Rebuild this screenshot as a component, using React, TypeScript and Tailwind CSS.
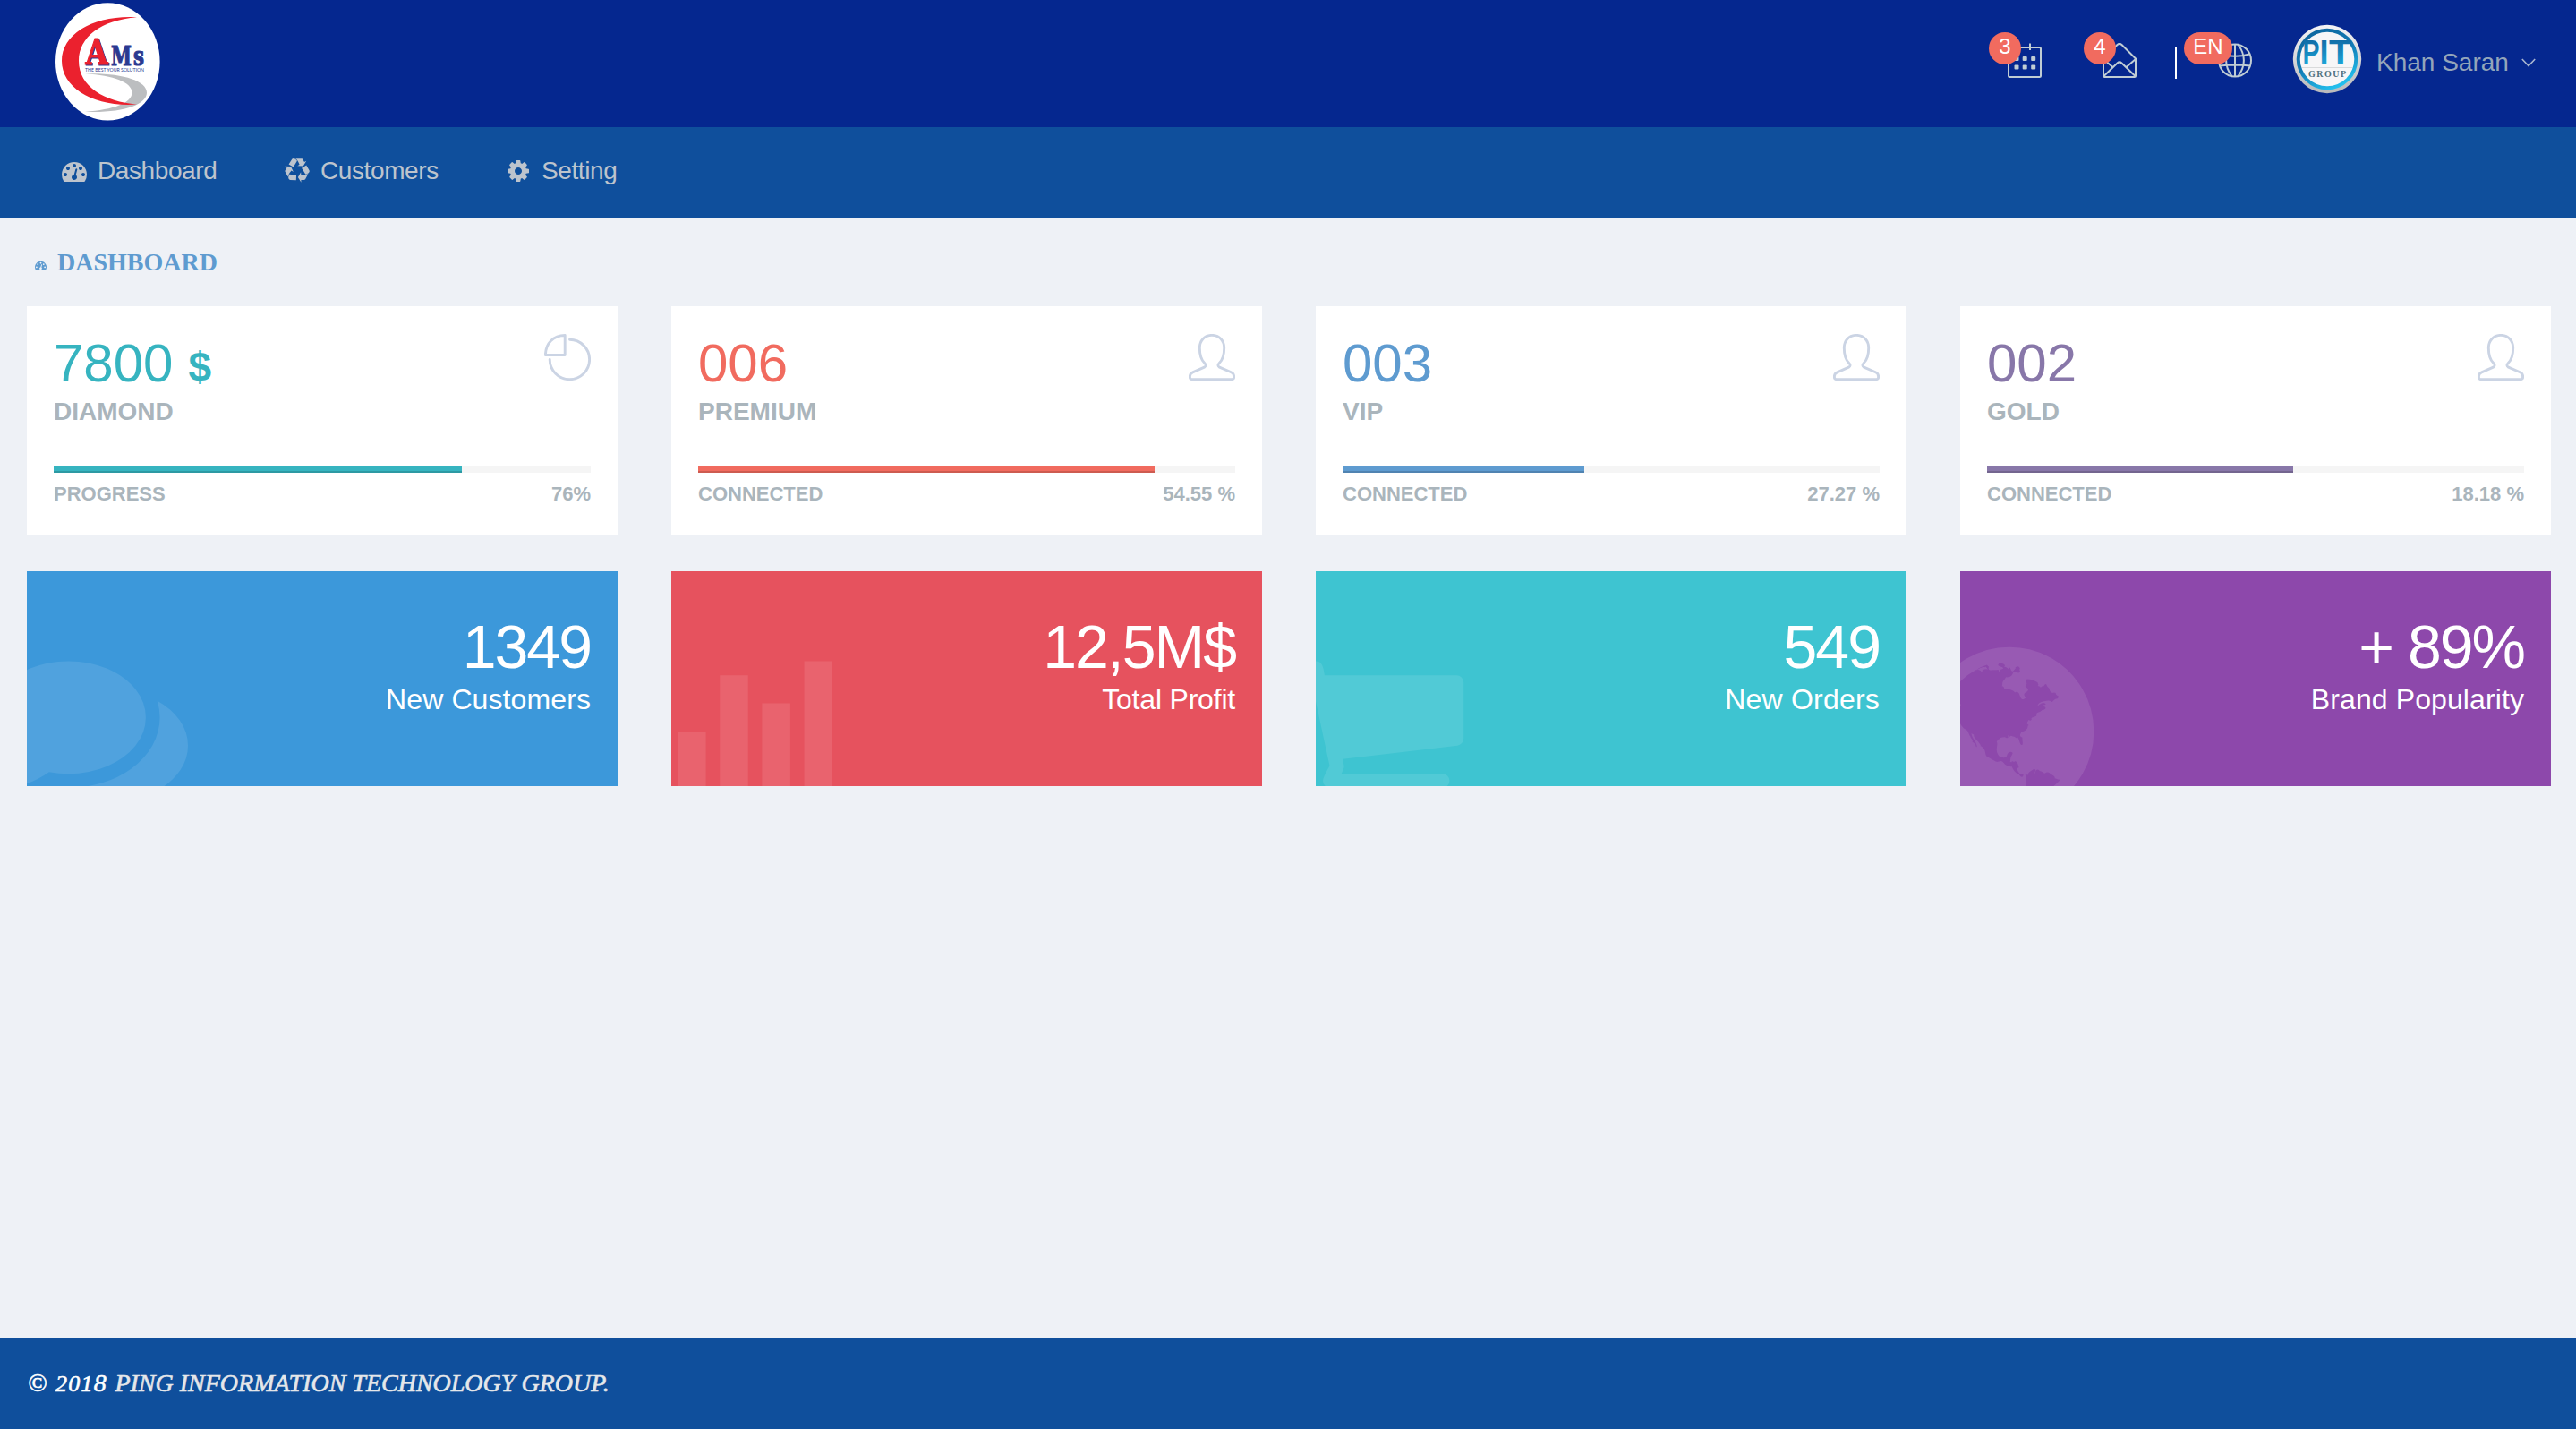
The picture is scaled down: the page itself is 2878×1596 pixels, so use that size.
import React from "react";

const SANS = "font-['Liberation_Sans',Arial,sans-serif]";
const SERIF = "font-['Liberation_Serif','Times_New_Roman',serif]";

const PATHS = {
  dashboard:
    "M384 1152q0-53-37.5-90.5t-90.5-37.5-90.5 37.5-37.5 90.5 37.5 90.5 90.5 37.5 90.5-37.5 37.5-90.5zm192-448q0-53-37.5-90.5t-90.5-37.5-90.5 37.5-37.5 90.5 37.5 90.5 90.5 37.5 90.5-37.5 37.5-90.5zm428 481l101-382q6-26-7.5-48.5t-38.5-29.5-48 6.5-30 39.5l-101 382q-60 5-107 43.5t-63 98.5q-20 77 20 146t117 89 146-20 89-117q16-60-6-117t-72-91zm660-33q0-53-37.5-90.5t-90.5-37.5-90.5 37.5-37.5 90.5 37.5 90.5 90.5 37.5 90.5-37.5 37.5-90.5zm-640-640q0-53-37.5-90.5t-90.5-37.5-90.5 37.5-37.5 90.5 37.5 90.5 90.5 37.5 90.5-37.5 37.5-90.5zm448 192q0-53-37.5-90.5t-90.5-37.5-90.5 37.5-37.5 90.5 37.5 90.5 90.5 37.5 90.5-37.5 37.5-90.5zm320 448q0 261-141 483-19 29-54 29h-1402q-35 0-54-29-141-221-141-483 0-182 71-348t191-286 286-191 348-71 348 71 286 191 191 286 71 348z",
  recycle:
    "M836 1169l-15 368-2 22-420-29q-36-3-67-31.5t-47-65.5q-11-27-14.5-55t4-65 12-55 21.5-64 19-53q78 12 509 28zm-387-586l180 379-147-92q-63 72-111.5 144.5t-72.5 125-39.5 94.5-18.5 63l-4 21-190-357q-17-26-18-56t6-47l8-18q35-63 114-188l-140-86zm1231 517l-188 359q-12 29-36.5 46.5t-43.5 20.5l-18 4q-71 7-219 12l8 164-230-367 211-362 7 173q170 16 283 5t170-33zm-785-924q-47 63-265 435l-317-187-19-12 225-356q20-31 60-45t80-10q24 2 48.5 12t42 21 41.5 33 36 34.5 36 39.5 32 35zm655 307l212 363q18 37 12.5 76t-27.5 74q-13 20-33 37t-38 28-48.5 22-47 16-51.5 14-46 12q-34-72-265-436l313-195zm-143-226l142-83-220 373-419-20 151-86q-34-89-75-166t-75.5-123.5-64.5-80-47-46.5l-17-13 405 1q31-3 58 10.5t39 28.5l11 15q39 61 112 190z",
  cog: "M1152 896q0-106-75-181t-181-75-181 75-75 181 75 181 181 75 181-75 75-181zm512-109v222q0 12-8 23t-20 13l-185 28q-19 54-39 91 35 50 107 138 10 12 10 25t-9 23q-27 37-99 108t-94 71q-12 0-26-9l-138-108q-44 23-91 38-16 136-29 186-7 28-36 28h-222q-14 0-24.5-8.5t-11.5-21.5l-28-184q-49-16-90-37l-141 107q-10 9-25 9-14 0-25-11-126-114-165-168-7-10-7-23 0-12 8-23 15-21 51-66.5t54-70.5q-27-50-41-99l-183-27q-13-2-21-12.5t-8-23.5v-222q0-12 8-23t19-13l186-28q14-46 39-92-40-57-107-138-10-12-10-24 0-10 9-23 26-36 98.5-107.5t94.5-71.5q13 0 26 10l138 107q44-23 91-38 16-136 29-186 7-28 36-28h222q14 0 24.5 8.5t11.5 21.5l28 184q49 16 90 37l142-107q9-9 24-9 13 0 25 10 129 119 165 170 7 8 7 22 0 12-8 23-15 21-51 66.5t-54 70.5q26 50 41 98l183 28q13 2 21 12.5t8 23.5z",
  comments:
    "M1408 768q0 139-94 257t-256.5 186.5-353.5 68.5q-86 0-176-16-124 88-278 128-36 9-86 16h-3q-11 0-20.5-8t-11.5-21q-1-3-1-6.5t.5-6.5 2-6l2.5-5 3.5-5.5 4-5 4.5-5 4-4.5q5-6 23-25t26-29.5 22.5-29 25-38.5 20.5-44q-124-72-195-177t-71-224q0-139 94-257t256.5-186.5 353.5-68.5 353.5 68.5 256.5 186.5 94 257zm384 256q0 120-71 224.5t-195 176.5q10 24 20.5 44t25 38.5 22.5 29 26 29.5 23 25q1 1 4 4.5t4.5 5 4 5 3.5 5.5l2.5 5 2 6 .5 6.5-1 6.5q-3 14-13 22t-22 7q-50-7-86-16-154-40-278-128-90 16-176 16-271 0-472-132 58 4 88 4 161 0 309-45t264-129q125-92 192-212t67-254q0-77-23-152 129 71 204 178t75 230z",
  chart:
    "M640 896v512h-256v-512h256zm384-512v1024h-256v-1024h256zm384 256v768h-256v-768h256zm384-384v1152h-256v-1152h256z",
  cart: "M704 1536q0 52-38 90t-90 38-90-38-38-90 38-90 90-38 90 38 38 90zm896 0q0 52-38 90t-90 38-90-38-38-90 38-90 90-38 90 38 38 90zm128-1088v512q0 24-16.5 42.5t-40.5 21.5l-1044 122q13 60 13 70 0 16-24 64h920q26 0 45 19t19 45-19 45-45 19h-1024q-26 0-45-19t-19-45q0-11 8-31.5t16-36 21.5-40 15.5-29.5l-177-823h-204q-26 0-45-19t-19-45 19-45 45-19h256q16 0 28.5 6.5t19.5 15.5 13 24.5 8 26 5.5 29.5 4.5 26h1201q26 0 45 19t19 45z",
  globe:
    "M896 128q209 0 385.5 103t279.5 279.5 103 385.5-103 385.5-279.5 279.5-385.5 103-385.5-103-279.5-279.5-103-385.5 103-385.5 279.5-279.5 385.5-103zm274 521q-2 1-9.5 9.5t-13.5 9.5q2 0 4.5-5t5-11 3.5-7q6-7 22-15 14-6 52-12 34-8 51 11-2-2 9.5-13t14.5-12q3-2 15-4.5t15-7.5l2-22q-12 1-17.5-7t-6.5-21q0 2-6 8 0-7-4.5-8t-11.5 1-9 1q-10-3-15-7.5t-8-16.5-4-15q-2-5-9.5-11t-9.5-10q-1-2-2.5-5.5t-3-6.5-4-5.5-5.5-2.5-7 5-7.5 10-4.5 5q-3-2-6-1.5t-4.5 1-4.5 3-5 3.5q-3 2-8.5 3t-8.5 2q15-5-1-11-10-4-16-3 9-4 7.5-12t-8.5-14h5q-1-4-8.5-8.5t-17.5-8.5-13-6q-8-5-34-9.5t-33-.5q-5 6-4.5 10.5t4 14 3.5 12.5q1 6-5.5 13t-6.5 12q0 7 14 15.5t10 21.5q-3 8-16 16t-16 12q-5 8-1.5 18.5t10.5 16.5q2 2 1.5 4t-3.5 4.5-5.5 4-6.5 3.5l-3 2q-11 5-20.5-6t-13.5-26q-7-25-16-30-23-8-29 1-5-13-41-26-25-9-58-4 6-1 0-15-7-15-19-12 3-6 4-17.5t1-13.5q3-13 12-23 1-1 7-8.5t9.5-13.5.5-6q35 4 50-11 5-5 11.5-17t10.5-17q9-6 14-5.5t14.5 5.5 14.5 5q14 1 15.5-11t-7.5-20q12 1 3-17-4-7-8-9-12-4-27 5-8 4 2 8-1-1-9.5 10.5t-16.5 17.5-16-5q-1-1-5.5-13.5t-9.5-13.5q-8 0-16 15 3-8-11-15t-24-8q19-12-8-27-7-4-20.5-5t-19.5 4q-5 7-5.5 11.5t5 8 10.5 5.5 11.5 4 8.5 3q14 10 8 14-2 1-8.5 3.5t-11.5 4.5-6 4q-3 4 0 14t-2 14q-5-5-9-17.5t-7-16.5q7 9-25 6l-10-1q-4 0-16 2t-20.5 1-13.5-8q-4-8 0-20 1-4 4-2-4-3-11-9.5t-10-8.5q-46 15-94 41 6 1 12-1 5-2 13-6.5t10-5.5q34-14 42-7l5-5q14 16 20 25-7-4-30-1-20 6-22 12 7 12 5 18-4-3-11.5-10t-14.5-11-15-5q-16 0-22 1-146 80-235 222 7 7 12 8 4 1 5 9t2.5 11 11.5-3q9 8 3 19 1-1 44 27 19 17 21 21 3 11-10 18-1-2-9-9t-9-4q-3 5 .5 18.5t10.5 12.5q-7 0-9.5 16t-2.5 35.5-1 23.5l2 1q-3 12 5.5 34.5t21.5 19.5q-13 3 20 43 6 8 8 9 3 2 12 7.5t15 10 10 10.5q4 5 10 22.5t14 23.5q-2 6 9.5 20t10.5 23q-1 0-2.5 1t-2.5 1q3 7 15.5 14t15.5 13q1 3 2 10t3 11 8 2q2-20-24-62-15-25-17-29-3-5-5.5-15.5t-4.5-14.5q2 0 6 1.5t8.5 3.5 7.5 4 2 3q-3 7 2 17.5t12 18.5 17 19 12 13q6 6 14 19.5t0 13.5q9 0 20 10.5t17 19.5q5 8 8 26t5 24q2 7 8.5 13.5t12.5 9.5l16 8 13 7q5 2 18.5 10.5t21.5 11.5q10 4 16 4t14.5-2.5 13.5-3.5q15-2 29 15t21 21q36 19 55 11-2 1 .5 7.5t8 15.5 9 14.5 5.5 8.5q5 6 18 15t18 15q6-4 7-9-3 8 7 20t18 10q14-3 14-32-31 15-49-18 0-1-2.5-5.5t-4-8.5-2.5-8.5 0-7.5 5-3q9 0 10-3.5t-2-12.5-4-13q-1-8-11-20t-12-15q-5 9-16 8t-16-9q0 1-1.5 5.5t-1.5 6.5q-13 0-15-1 1-3 2.5-17.5t3.5-22.5q1-4 5.5-12t7.5-14.5 4-12.5-4.5-9.5-17.5-2.5q-19 1-26 20-1 3-3 10.5t-5 11.5-9 7q-7 3-24 2t-24-5q-13-8-22.5-29t-9.5-37q0-10 2.5-26.5t3-25-5.5-24.5q3-2 9-9.5t10-10.5q2-1 4.5-1.5t4.5 0 4-1.5 3-6q-1-1-4-3-3-3-4-3 7 3 28.5-1.5t27.5 1.5q15 11 22-2 0-1-2.5-9.5t-.5-13.5q5 27 29 9 3 3 15.5 5t17.5 5q3 2 7 5.5t5.5 4.5 5-.5 8.5-6.5q10 14 12 24 11 40 19 44 7 3 11 2t4.5-9.5 0-14-1.5-12.5l-1-8v-18l-1-8q-15-3-18.5-12t1.5-18.5 15-18.5q1-1 8-3.5t15.5-6.5 12.5-8q21-19 15-35 7 0 11-9-1 0-5-3t-7.5-5-4.5-2q9-5 2-16 5-3 7.5-11t7.5-10q9 12 21 2 8-8 1-16 5-7 20.5-10.5t18.5-9.5q7 2 8-2t1-12 3-12q4-5 15-9t13-5l17-11q3-4 0-4 18 2 31-11 10-11-6-20 3-6-3-9.5t-15-5.5q3-1 11.5-.5t10.5-1.5q15-10-7-16-17-5-43 12zm-163 877q206-36 351-189-3-3-12.5-4.5t-12.5-3.5q-18-7-24-8 1-7-2.5-13t-8-9-12.5-8-11-7q-2-2-7-6t-7-5.5-7.5-4.5-8.5-2-10 1l-3 1q-3 1-5.5 2.5t-5.5 3-4 3 0 2.5q-21-17-36-22-5-1-11-5.5t-10.5-7-10-1.5-11.5 7q-5 5-6 15t-2 13q-7-5 0-17.5t2-18.5q-3-6-10.5-4.5t-12 4.5-11.5 8.5-9 6.5-8.5 5.5-8.5 7.5q-3 4-6 12t-5 11q-2-4-11.5-6.5t-9.5-5.5q2 10 4 35t5 38q7 31-12 48-27 25-29 40-4 22 12 26 0 7-8 20.5t-7 21.5q0 6 2 16z",
};

function Glyph({ name, className }: { name: keyof typeof PATHS; className: string }) {
  return (
    <svg viewBox="0 0 1792 1792" className={className} fill="currentColor">
      <path d={PATHS[name]} />
    </svg>
  );
}

function Logo() {
  return (
    <svg viewBox="0 0 118 132" className="ml-[61px] mt-[3px] h-[132px] w-[118px]">
      <ellipse cx="59.3" cy="65.8" rx="58.3" ry="65.6" fill="#fff" />
      <path
        d="M34 79.5C74 78 103 87 103 100.500C103 114 76 123.500 34 121.800C66 119.500 86.500 112 86.500 100.500C86.500 89 66 81 34 79.500Z"
        fill="#bcbec0"
      />
      <path
        d="M92 16.200C45 13.500 8 34 8 65C8 96 45 117 92 113.500C56 110.500 27 94 27 65C27 38 52 19.500 92 16.200Z"
        fill="#eb212e"
      />
      <g fontFamily="'DejaVu Serif', serif" fontWeight="700" strokeWidth="1.200">
        <text
          x="34.500" y="68.800" fontSize="39" textLength="25" lengthAdjust="spacingAndGlyphs"
          fill="#eb212e" stroke="#eb212e" className="[filter:drop-shadow(1px_1.5px_0_#2b3990)]"
        >
          A
        </text>
        <text x="63" y="69.500" fontSize="30" textLength="23" lengthAdjust="spacingAndGlyphs" fill="#2b3990" stroke="#2b3990">M</text>
        <text x="88" y="69.500" fontSize="29" textLength="12" lengthAdjust="spacingAndGlyphs" fill="#2b3990" stroke="#2b3990">s</text>
      </g>
      <text
        x="34" y="76.800" fontSize="6.200" textLength="66" lengthAdjust="spacingAndGlyphs"
        fontFamily="Lato, sans-serif" fill="#2b3990"
      >
        THE BEST YOUR SOLUTION
      </text>
    </svg>
  );
}

function Avatar() {
  return (
    <svg viewBox="0 0 78 78" className="h-[78px] w-[78px]">
      <defs>
        <linearGradient id="rim" x1="0" y1="0" x2="0" y2="1">
          <stop offset="0" stopColor="#f4f4f6" />
          <stop offset="1" stopColor="#b9b9bb" />
        </linearGradient>
        <linearGradient id="ring" x1="0.2" y1="0" x2="0.7" y2="1">
          <stop offset="0" stopColor="#0e659d" />
          <stop offset="0.5" stopColor="#127bb5" />
          <stop offset="1" stopColor="#25c8f4" />
        </linearGradient>
        <linearGradient id="ink" x1="0" y1="0" x2="0" y2="1">
          <stop offset="0.2" stopColor="#126fa9" />
          <stop offset="1" stopColor="#1fb4e4" />
        </linearGradient>
      </defs>
      <circle cx="39" cy="39" r="38.200" fill="url(#rim)" />
      <circle cx="39" cy="39" r="34.300" fill="url(#ring)" />
      <circle cx="39" cy="39" r="30.300" fill="#f7f6f7" />
      <g fontFamily="'Liberation Sans', Arial, sans-serif" fontWeight="700" fill="url(#ink)">
        <text x="11.500" y="44.600" fontSize="38" textLength="19" lengthAdjust="spacingAndGlyphs">P</text>
        <text x="30.500" y="44.600" fontSize="38" textLength="10" lengthAdjust="spacingAndGlyphs">I</text>
        <text x="41" y="44.600" fontSize="38" textLength="25.500" lengthAdjust="spacingAndGlyphs">T</text>
      </g>
      <path d="M11 48.500H67" stroke="#d9dadb" strokeWidth="1" />
      <text
        x="18" y="58.800" fontSize="10" textLength="42" lengthAdjust="spacing"
        fontFamily="'Liberation Serif', serif" fontWeight="700" fill="#4f6f7c"
      >
        GROUP
      </text>
    </svg>
  );
}

function Calendar() {
  return (
    <svg viewBox="0 0 38 39" className="h-[39px] w-[38px]" fill="none" stroke="#c0cdd4" strokeWidth="2">
      <rect x="1" y="5" width="36" height="33" rx="1.500" />
      <path d="M13 0.500V8M25 0.500V8" />
      <g fill="#c0cdd4" stroke="none">
        <rect x="7.500" y="15" width="5" height="5" rx="1" />
        <rect x="16.700" y="15" width="5" height="5" rx="1" />
        <rect x="26.200" y="15" width="5" height="5" rx="1" />
        <rect x="7.500" y="24.400" width="5" height="5" rx="1" />
        <rect x="16.700" y="24.400" width="5" height="5" rx="1" />
        <rect x="26.200" y="24.400" width="5" height="5" rx="1" />
      </g>
    </svg>
  );
}

function Envelope() {
  return (
    <svg viewBox="0 0 38 39" className="h-[39px] w-[38px]" fill="none" stroke="#c0cdd4" strokeWidth="2" strokeLinejoin="round">
      <path d="M1 17.500L16.500 2Q19 -0.200 21.500 2L37 17.500V36.500Q37 38 35.500 38H2.500Q1 38 1 36.500Z" />
      <path d="M1.500 37L16.500 22.500Q19 20.200 21.500 22.500L36.500 37M1 18L11.500 27M37 18L26.500 27" />
    </svg>
  );
}

function WorldGrid() {
  return (
    <svg viewBox="0 0 38 39" className="h-[39px] w-[38px]" fill="none" stroke="#c0cdd4" strokeWidth="2">
      <circle cx="19" cy="19.500" r="18" />
      <path d="M19 1.500V37.500M2 25.500Q19 23.500 36 25.500M3 12.500Q19 17 35 12.500" />
      <path d="M15.500 2C7 13 7 26 15.500 37M22.500 2C31 13 31 26 22.500 37" />
    </svg>
  );
}

function PieIcon() {
  return (
    <svg viewBox="0 0 52 52" className="h-[52px] w-[52px]" fill="none" stroke="#cbd4e4" strokeWidth="2.900" strokeLinecap="round" strokeLinejoin="round">
      <path d="M23.200 1.500V23.500H1.400C1.400 11 10 1.500 23.200 1.500Z" />
      <path d="M28.500 6.300A22.200 22.200 0 1 1 6.200 28.500" />
    </svg>
  );
}

function PersonIcon() {
  return (
    <svg viewBox="0 0 52 52" className="h-[52px] w-[52px]" fill="none" stroke="#cbd4e4" strokeWidth="2.900" strokeLinejoin="round">
      <path d="M26 1.400C17.500 1.400 12.300 7.500 12.300 15.500C12.300 23 14 29 17.800 32.500C19.600 34.200 19.600 36 17.500 37.200L4.500 42.800Q1.400 44.200 1.400 47.500V48.500Q1.400 50.600 3.500 50.600H48.500Q50.600 50.600 50.600 48.500V47.500Q50.600 44.200 47.500 42.800L34.500 37.200C32.400 36 32.400 34.200 34.200 32.500C38 29 39.700 23 39.700 15.500C39.700 7.500 34.500 1.400 26 1.400Z" />
    </svg>
  );
}

function IconWithBadge({ badge, badgeClass, children }: { badge: string; badgeClass: string; children: React.ReactNode }) {
  return (
    <div className="relative h-[39px] w-[38px]">
      {children}
      <span className={`absolute top-[-12px] flex h-[36px] items-center justify-center rounded-full bg-[#f16b5f] pb-[4px] text-[24px] leading-none text-white ${badgeClass}`}>
        {badge}
      </span>
    </div>
  );
}

const metrics = [
  { value: "7800", unit: "$", name: "DIAMOND", status: "PROGRESS", pct: "76%", width: "76%", color: "text-[#36b4c0]", bar: "bg-[#36b4c0]", icon: "pie" },
  { value: "006", unit: "", name: "PREMIUM", status: "CONNECTED", pct: "54.55 %", width: "85%", color: "text-[#f16b5f]", bar: "bg-[#f16b5f]", icon: "person" },
  { value: "003", unit: "", name: "VIP", status: "CONNECTED", pct: "27.27 %", width: "45%", color: "text-[#5e9bd0]", bar: "bg-[#5e9bd0]", icon: "person" },
  { value: "002", unit: "", name: "GOLD", status: "CONNECTED", pct: "18.18 %", width: "57%", color: "text-[#8877a9]", bar: "bg-[#8877a9]", icon: "person" },
];

const tiles: { value: string; label: string; bg: string; icon: keyof typeof PATHS; iconLeft: string; tracking: string }[] = [
  { value: "1349", label: "New Customers", bg: "bg-[#3c98da]", icon: "comments", iconLeft: "left-[-40px]", tracking: "tracking-[0.1px]" },
  { value: "12,5M$", label: "Total Profit", bg: "bg-[#e6525e]", icon: "chart", iconLeft: "left-[-40px]", tracking: "tracking-[-0.2px]" },
  { value: "549", label: "New Orders", bg: "bg-[#3ec4d1]", icon: "cart", iconLeft: "left-[-47px]", tracking: "tracking-[0.2px]" },
  { value: "+ 89%", label: "Brand Popularity", bg: "bg-[#8d48ab]", icon: "globe", iconLeft: "left-[-55px]", tracking: "tracking-[0.1px]" },
];

const nav: { label: string; icon: keyof typeof PATHS; width: string }[] = [
  { label: "Dashboard", icon: "dashboard", width: "w-[249px]" },
  { label: "Customers", icon: "recycle", width: "w-[247px]" },
  { label: "Setting", icon: "cog", width: "w-[240px]" },
];

export default function App() {
  return (
    <div className={`flex h-[1596px] w-[2878px] flex-col overflow-hidden bg-[#eef1f6] ${SANS}`}>
      <header className="flex h-[142px] shrink-0 justify-between bg-[#05278f]">
        <Logo />
        <div className="flex items-start pr-[45px]">
          <div className="mt-[48px] flex">
            <IconWithBadge badge="3" badgeClass="left-[-21px] w-[36px]"><Calendar /></IconWithBadge>
            <div className="ml-[68px]">
              <IconWithBadge badge="4" badgeClass="left-[-21px] w-[36px]"><Envelope /></IconWithBadge>
            </div>
            <div className="ml-[43px] mt-[4px] h-[36px] w-[2px] bg-white" />
            <div className="ml-[46px]">
              <IconWithBadge badge="EN" badgeClass="left-[-38px] w-[54px]"><WorldGrid /></IconWithBadge>
            </div>
          </div>
          <div className="ml-[45px] mt-[27px]"><Avatar /></div>
          <div className="ml-[16px] mt-[56px] flex items-center">
            <span className="w-[149px] whitespace-nowrap text-[28px] leading-[28px] text-[#93a5ba]">Khan Saran</span>
            <svg viewBox="0 0 16 10" className="ml-[13px] h-[10px] w-[16px]" fill="none" stroke="#a9b6d0" strokeWidth="1.600">
              <path d="M0.800 1L8 8.500L15.200 1" />
            </svg>
          </div>
        </div>
      </header>

      <nav className="flex h-[102px] shrink-0 items-center bg-[#0f4f9c] pb-[5px] pl-[69px] text-[#bdc4cd]">
        {nav.map((n) => (
          <a key={n.label} className={`flex items-center gap-[12px] ${n.width}`}>
            <Glyph name={n.icon} className="h-[28px] w-[28px]" />
            <span className="text-[28px] leading-[28px] tracking-[-0.4px]">{n.label}</span>
          </a>
        ))}
      </nav>

      <main className="grow px-[30px]">
        <h1 className={`flex h-[98px] items-center pl-[9px] text-[28px] font-bold leading-[28px] text-[#5e9bd0] ${SERIF}`}>
          <Glyph name="dashboard" className="mt-[6px] h-[13px] w-[13px]" />
          <span className="ml-[12px]">DASHBOARD</span>
        </h1>

        <section className="grid grid-cols-[repeat(4,660px)] gap-x-[60px]">
          {metrics.map((m) => (
            <article key={m.name} className="h-[256px] bg-white px-[30px] font-bold text-[#aab5bc]">
              <div className="flex h-[132px] justify-between">
                <div className="pt-[34px]">
                  <div className={`flex h-[60px] items-baseline text-[60px] font-normal leading-[60px] ${m.color}`}>
                    {m.value}
                    {m.unit && <small className="ml-[17px] text-[46px] font-bold leading-[46px]">{m.unit}</small>}
                  </div>
                  <div className="mt-[10px] text-[28px] leading-[28px]">{m.name}</div>
                </div>
                <div className="pt-[31px]">{m.icon === "pie" ? <PieIcon /> : <PersonIcon />}</div>
              </div>
              <div className="mt-[46px] h-[8px] bg-[#f5f5f5]">
                <div className={`h-full shadow-[inset_0_-2px_0_rgba(0,0,0,0.15)] ${m.bar}`} style={{ width: m.width }} />
              </div>
              <div className="mt-[13px] flex justify-between text-[22px] leading-[22px]">
                <span>{m.status}</span>
                <span>{m.pct}</span>
              </div>
            </article>
          ))}
        </section>

        <section className="mt-[40px] grid grid-cols-[repeat(4,660px)] gap-x-[60px]">
          {tiles.map((t) => (
            <article key={t.label} className={`relative h-[240px] overflow-hidden px-[30px] pt-[50px] text-right text-white ${t.bg}`}>
              <Glyph name={t.icon} className={`absolute top-[68.500px] h-[220px] w-[220px] text-white/10 ${t.iconLeft}`} />
              <div className="text-[68px] leading-[68px] tracking-[-2px]">{t.value}</div>
              <div className={`mt-[9px] text-[32px] leading-[32px] ${t.tracking}`}>{t.label}</div>
            </article>
          ))}
        </section>
      </main>

      <footer className={`flex h-[102px] shrink-0 items-center bg-[#0f4f9c] pl-[31px] italic text-[#e5e7ea] ${SERIF}`}>
        <p className="flex items-baseline whitespace-pre text-[28px] leading-[28px] [-webkit-text-stroke:0.6px_currentColor]">
          <span className="tracking-[1.300px] text-white">© <span className="text-[26px]">201</span>8 </span>
          <span>PING INFORMATION TECHNOLOGY GROUP.</span>
        </p>
      </footer>
    </div>
  );
}
